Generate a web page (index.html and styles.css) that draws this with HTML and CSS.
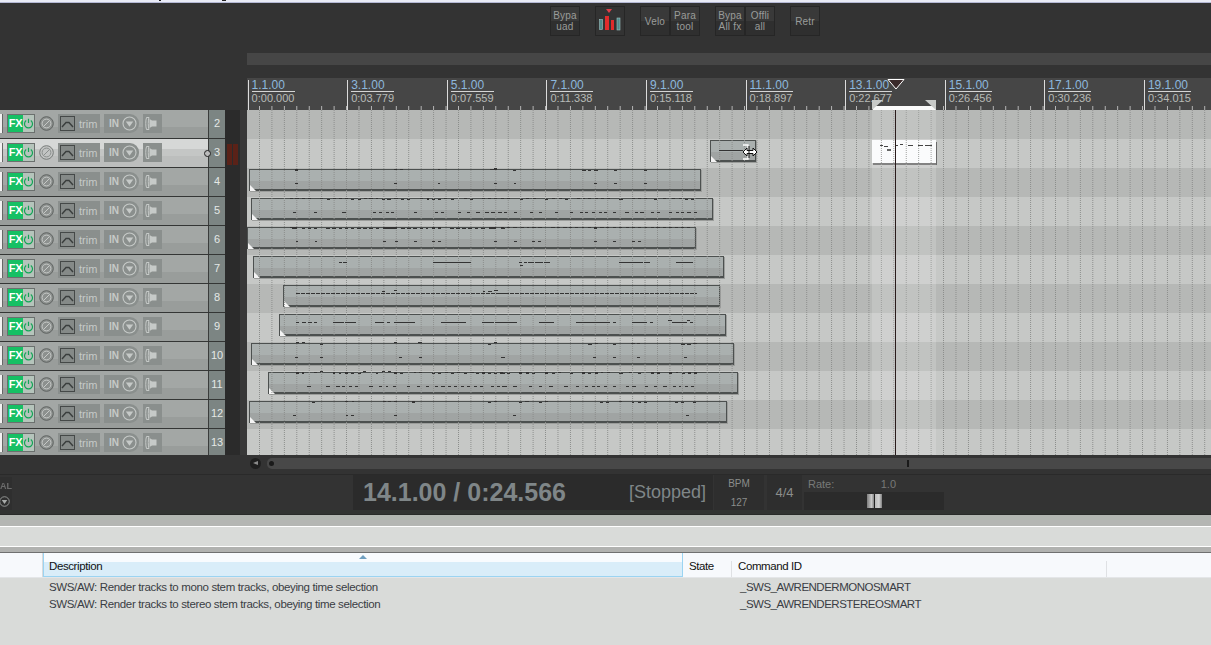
FILE: index.html
```html
<!DOCTYPE html>
<html lang="en">
<head>
<meta charset="utf-8">
<title>REAPER arrange view</title>
<link rel="stylesheet" href="styles.css">
</head>
<body>
<svg class="defs" width="0" height="0" aria-hidden="true">
  <symbol id="power" viewBox="0 0 11 11"><path d="M3.2 2.6A4 4 0 1 0 7.8 2.6M5.5 .8V5" fill="none" stroke="currentColor" stroke-width="1.2"/></symbol>
  <symbol id="knob" viewBox="0 0 15 15"><circle cx="7.5" cy="7.5" r="6.8" fill="#8c908e" stroke="#5f6361"/><circle cx="7.5" cy="7.5" r="4.4" fill="none" stroke="#c6c9c7"/><path d="M4.5 10.500 10.500 4.500" stroke="#c6c9c7"/></symbol>
  <symbol id="knobsel" viewBox="0 0 15 15"><circle cx="7.5" cy="7.5" r="6.8" fill="#c2c4c3" stroke="#777b79"/><circle cx="7.5" cy="7.5" r="4.4" fill="none" stroke="#8b8f8d"/><path d="M4.5 10.500 10.500 4.500" stroke="#8b8f8d"/></symbol>
  <symbol id="env" viewBox="0 0 15 15"><rect x=".5" y=".5" width="14" height="14" fill="#858a88" stroke="#454948"/><path d="M2 11 6 6.500H9L13 11" fill="none" stroke="#3a3e3d" stroke-width="1.400"/></symbol>
  <symbol id="arrow" viewBox="0 0 15 15"><circle cx="7.5" cy="7.5" r="6.5" fill="none" stroke="#c6cac8" stroke-width="1.1"/><path d="M3.8 5.500H11.200L7.500 10.800Z" fill="#c6cac8"/></symbol>
  <symbol id="spk" viewBox="0 0 19 19"><path d="M6 3.500H3.500C2.500 6 2.500 13 3.500 15.500H6C5 13 5 6 6 3.500Z" fill="none" stroke="#c6cac8"/><path d="M6.500 5 9 6.500H13.500V12.500H9L6.500 14Z" fill="#c6cac8"/></symbol>
</svg>

<div class="topstrip"><i class="speck speck-a"></i><i class="speck speck-b"></i></div>

<div class="toolbar">
  <div class="btn"><span>Bypa<br>uad</span></div>
  <div class="btn btn-meter">
    <svg width="30" height="30" viewBox="0 0 30 30"><path d="M11 3H17L14 7Z" fill="#e0404a"/><rect x="4.500" y="13.500" width="3" height="10" fill="#4f8a8a" stroke="#9fc4c4" stroke-width=".6"/><rect x="10" y="10" width="4" height="14" fill="#e02c2c"/><rect x="16" y="14" width="3" height="10" fill="#e02c2c"/><rect x="22" y="12" width="3" height="12" fill="#4f8a8a" stroke="#9fc4c4" stroke-width=".6"/></svg>
  </div>
  <div class="btn"><span>Velo</span></div>
  <div class="btn btn-join"><span>Para<br>tool</span></div>
  <div class="btn"><span>Bypa<br>All fx</span></div>
  <div class="btn btn-join"><span>Offli<br>all</span></div>
  <div class="btn"><span>Retr</span></div>
</div>

<div class="overview"></div>

<div class="ruler">
  <div class="mark"><u>1.1.00</u><span>0:00.000</span></div>
  <div class="mark"><u>3.1.00</u><span>0:03.779</span></div>
  <div class="mark"><u>5.1.00</u><span>0:07.559</span></div>
  <div class="mark"><u>7.1.00</u><span>0:11.338</span></div>
  <div class="mark"><u>9.1.00</u><span>0:15.118</span></div>
  <div class="mark"><u>11.1.00</u><span>0:18.897</span></div>
  <div class="mark"><u>13.1.00</u><span>0:22.677</span></div>
  <div class="mark"><u>15.1.00</u><span>0:26.456</span></div>
  <div class="mark"><u>17.1.00</u><span>0:30.236</span></div>
  <div class="mark"><u>19.1.00</u><span>0:34.015</span></div>
  <div class="sel-bar"></div>
  <svg class="sel-flag sel-flag-l" width="11" height="10" viewBox="0 0 11 10"><path d="M0 0H11L0 10Z" fill="#c8cac8"/></svg>
  <svg class="sel-flag sel-flag-r" width="11" height="10" viewBox="0 0 11 10"><path d="M0 0H11V10Z" fill="#c8cac8"/></svg>
  <svg class="playhead-top" width="18" height="11" viewBox="0 0 18 11"><path d="M1 .5H17L9 10Z" fill="#3a2a2a" stroke="#fff"/></svg>
</div>

<div class="workspace">
  <div class="tcp">
    <div class="track"><i class="sliver"></i><div class="fx"><b>FX</b><span class="pw"><svg width="11" height="11"><use href="#power"/></svg></span></div><svg class="knob" width="15" height="15"><use href="#knob"/></svg><div class="trim"><svg width="15" height="15"><use href="#env"/></svg><span>trim</span></div><div class="in"><span>IN</span><svg width="15" height="15"><use href="#arrow"/></svg></div><div class="spk"><svg width="19" height="19"><use href="#spk"/></svg></div><div class="num">2</div></div>
    <div class="track track-sel"><i class="sliver"></i><div class="fx"><b>FX</b><span class="pw"><svg width="11" height="11"><use href="#power"/></svg></span></div><svg class="knob" width="15" height="15"><use href="#knobsel"/></svg><div class="trim"><svg width="15" height="15"><use href="#env"/></svg><span>trim</span></div><div class="in"><span>IN</span><svg width="15" height="15"><use href="#arrow"/></svg></div><div class="spk"><svg width="19" height="19"><use href="#spk"/></svg></div><div class="num">3</div><i class="grip"></i></div>
    <div class="track"><i class="sliver"></i><div class="fx"><b>FX</b><span class="pw"><svg width="11" height="11"><use href="#power"/></svg></span></div><svg class="knob" width="15" height="15"><use href="#knob"/></svg><div class="trim"><svg width="15" height="15"><use href="#env"/></svg><span>trim</span></div><div class="in"><span>IN</span><svg width="15" height="15"><use href="#arrow"/></svg></div><div class="spk"><svg width="19" height="19"><use href="#spk"/></svg></div><div class="num">4</div></div>
    <div class="track"><i class="sliver"></i><div class="fx"><b>FX</b><span class="pw"><svg width="11" height="11"><use href="#power"/></svg></span></div><svg class="knob" width="15" height="15"><use href="#knob"/></svg><div class="trim"><svg width="15" height="15"><use href="#env"/></svg><span>trim</span></div><div class="in"><span>IN</span><svg width="15" height="15"><use href="#arrow"/></svg></div><div class="spk"><svg width="19" height="19"><use href="#spk"/></svg></div><div class="num">5</div></div>
    <div class="track"><i class="sliver"></i><div class="fx"><b>FX</b><span class="pw"><svg width="11" height="11"><use href="#power"/></svg></span></div><svg class="knob" width="15" height="15"><use href="#knob"/></svg><div class="trim"><svg width="15" height="15"><use href="#env"/></svg><span>trim</span></div><div class="in"><span>IN</span><svg width="15" height="15"><use href="#arrow"/></svg></div><div class="spk"><svg width="19" height="19"><use href="#spk"/></svg></div><div class="num">6</div></div>
    <div class="track"><i class="sliver"></i><div class="fx"><b>FX</b><span class="pw"><svg width="11" height="11"><use href="#power"/></svg></span></div><svg class="knob" width="15" height="15"><use href="#knob"/></svg><div class="trim"><svg width="15" height="15"><use href="#env"/></svg><span>trim</span></div><div class="in"><span>IN</span><svg width="15" height="15"><use href="#arrow"/></svg></div><div class="spk"><svg width="19" height="19"><use href="#spk"/></svg></div><div class="num">7</div></div>
    <div class="track"><i class="sliver"></i><div class="fx"><b>FX</b><span class="pw"><svg width="11" height="11"><use href="#power"/></svg></span></div><svg class="knob" width="15" height="15"><use href="#knob"/></svg><div class="trim"><svg width="15" height="15"><use href="#env"/></svg><span>trim</span></div><div class="in"><span>IN</span><svg width="15" height="15"><use href="#arrow"/></svg></div><div class="spk"><svg width="19" height="19"><use href="#spk"/></svg></div><div class="num">8</div></div>
    <div class="track"><i class="sliver"></i><div class="fx"><b>FX</b><span class="pw"><svg width="11" height="11"><use href="#power"/></svg></span></div><svg class="knob" width="15" height="15"><use href="#knob"/></svg><div class="trim"><svg width="15" height="15"><use href="#env"/></svg><span>trim</span></div><div class="in"><span>IN</span><svg width="15" height="15"><use href="#arrow"/></svg></div><div class="spk"><svg width="19" height="19"><use href="#spk"/></svg></div><div class="num">9</div></div>
    <div class="track"><i class="sliver"></i><div class="fx"><b>FX</b><span class="pw"><svg width="11" height="11"><use href="#power"/></svg></span></div><svg class="knob" width="15" height="15"><use href="#knob"/></svg><div class="trim"><svg width="15" height="15"><use href="#env"/></svg><span>trim</span></div><div class="in"><span>IN</span><svg width="15" height="15"><use href="#arrow"/></svg></div><div class="spk"><svg width="19" height="19"><use href="#spk"/></svg></div><div class="num">10</div></div>
    <div class="track"><i class="sliver"></i><div class="fx"><b>FX</b><span class="pw"><svg width="11" height="11"><use href="#power"/></svg></span></div><svg class="knob" width="15" height="15"><use href="#knob"/></svg><div class="trim"><svg width="15" height="15"><use href="#env"/></svg><span>trim</span></div><div class="in"><span>IN</span><svg width="15" height="15"><use href="#arrow"/></svg></div><div class="spk"><svg width="19" height="19"><use href="#spk"/></svg></div><div class="num">11</div></div>
    <div class="track"><i class="sliver"></i><div class="fx"><b>FX</b><span class="pw"><svg width="11" height="11"><use href="#power"/></svg></span></div><svg class="knob" width="15" height="15"><use href="#knob"/></svg><div class="trim"><svg width="15" height="15"><use href="#env"/></svg><span>trim</span></div><div class="in"><span>IN</span><svg width="15" height="15"><use href="#arrow"/></svg></div><div class="spk"><svg width="19" height="19"><use href="#spk"/></svg></div><div class="num">12</div></div>
    <div class="track"><i class="sliver"></i><div class="fx"><b>FX</b><span class="pw"><svg width="11" height="11"><use href="#power"/></svg></span></div><svg class="knob" width="15" height="15"><use href="#knob"/></svg><div class="trim"><svg width="15" height="15"><use href="#env"/></svg><span>trim</span></div><div class="in"><span>IN</span><svg width="15" height="15"><use href="#arrow"/></svg></div><div class="spk"><svg width="19" height="19"><use href="#spk"/></svg></div><div class="num">13</div></div>
  </div>
  <div class="meters"><i></i><i></i></div>
  <div class="arrange">
    <div class="lane"></div>
    <div class="lane lane-l"><div class="clip c3a"></div><div class="clip clip-sel c3b"></div></div>
    <div class="lane"><div class="clip c4"></div></div>
    <div class="lane lane-l"><div class="clip c5"></div></div>
    <div class="lane"><div class="clip c6"></div></div>
    <div class="lane lane-l"><div class="clip c7"></div></div>
    <div class="lane"><div class="clip c8"></div></div>
    <div class="lane lane-l"><div class="clip c9"></div></div>
    <div class="lane"><div class="clip c10"></div></div>
    <div class="lane lane-l"><div class="clip c11"></div></div>
    <div class="lane"><div class="clip c12"></div></div>
    <div class="lane lane-l"></div>
    <div class="grid"></div>
    <div class="sel-range"></div>
    <svg class="notes" width="964" height="345" viewBox="247 110 964 345">
      <g transform="translate(245 160) scale(.33333)">
        <path d="M447 30H456M465 30H474M579 30H585M735 30H747M150 70H159M447 70H456M579 70H585M747 70H756M135 117H145M150 117H162M170 117H180M188 117H198M225 117H235M246 118H256M264 115H272M282 115H292M300 115H308M318 118H327M338 118H348M357 115H366M372 115H384M392 115H398M410 118H420M427 118H437M447 115H460M468 118H478M486 118H494M525 115H533M561 118H570M579 118H588M597 115H605M618 118H627M657 115H666M675 118H684M711 115H720M729 115H738M747 115H756M144 157H154M207 157H216M291 157H303M384 157H393M402 157H411M423 157H432M438 157H447M507 157H516M570 157H579M588 157H597M639 157H648M666 157H675M693 157H705M720 157H732M738 157H750M759 157H768M777 157H780M135 202H147M171 205H180M189 205H198M207 205H216M243 205H255M261 205H273M282 205H291M300 205H309M318 205H327M336 205H348M354 205H366M372 205H384M393 205H402M468 205H480M486 205H498M504 205H516M525 205H534M543 205H549M615 205H627M633 205H645M651 205H663M669 205H681M690 205H699M708 205H720M768 205H780M153 244H159M210 244H216M414 244H423M450 244H459M507 244H516M561 244H570M579 244H588M747 244H756M282 307H291M294 307H306M564 307H678" fill="none" stroke="#333" stroke-width="3"/>
        <path d="M150 30H160M747 28H756M546 117H552M141 204H157M414 203H456M561 204H570M579 204H588M732 204H753" fill="none" stroke="#333" stroke-width="6"/>
      </g>
      <g transform="translate(500 160) scale(.33333)">
        <path d="M39 31H48M246 31H258M264 31H272M282 31H294M342 31H350M432 31H441M42 70H48M282 70H291M342 70H351M432 70H441M3 115H12M21 115H30M60 118H69M78 115H87M99 115H108M135 118H144M156 115H165M177 115H186M195 118H204M231 115H240M249 115H255M264 115H273M285 115H294M303 115H312M321 115H330M357 118H369M396 115H405M414 115H423M432 115H441M462 118H471M489 115H498M516 115H525M537 115H546M555 118H564M573 118H582M0 157H6M12 157H21M42 157H51M90 157H99M117 157H126M165 157H174M210 157H219M240 157H249M255 157H264M276 157H285M297 157H306M312 157H321M339 157H348M375 157H387M405 157H414M420 157H432M453 157H462M471 157H480M507 157H516M528 157H537M543 157H552M561 157H573M582 157H591M3 204H12M21 204H30M39 204H51M63 204H72M81 204H87M96 204H108M114 204H126M153 204H165M171 204H180M189 204H201M207 204H216M225 204H234M246 204H252M264 204H273M300 204H312M318 204H327M339 204H348M357 204H366M378 204H387M396 204H405M414 204H423M435 204H441M453 204H462M468 204H480M489 204H498M507 204H516M525 204H534M543 204H552M561 204H570M42 244H51M96 244H105M114 244H123M282 244H291M339 244H348M396 244H405M414 244H423M57 307H66M72 307H81M84 307H102M105 307H129M132 307H150M60 316H69M357 307H429M432 307H450M528 307H579" fill="none" stroke="#333" stroke-width="3"/>
        <path d="M282 203H291" fill="none" stroke="#333" stroke-width="6"/>
      </g>
      <g transform="translate(245 280) scale(.33333)">
        <path d="M411 35H420M447 31H456M714 34H720M729 34H741M747 31H759M153 127H162M171 127H183M189 127H201M207 127H216M264 127H297M300 127H333M390 127H417M426 127H435M447 127H510M588 127H663M711 127H747M750 127H780M153 189H162M171 189H180M225 193H234M447 189H456M519 189H531M729 193H738M747 189H756M150 232H159M225 232H234M462 232H471M522 232H531M768 232H780M207 279H216M225 276H234M282 280H288M318 280H327M339 280H348M354 276H363M393 280H399M411 276H420M429 276H438M465 280H474M507 277H513M522 277H531M561 280H570M579 280H588M600 277H609M618 280H627M636 277H645M657 280H666M675 277H687M693 280H702M729 280H738M747 280H756M765 280H780M186 319H198M243 319H255M273 319H285M291 319H300M312 319H321M330 319H339M372 319H384M402 319H411M423 319H429M444 319H453M486 319H495M516 319H525M543 319H552M570 319H579M588 319H600M609 319H618M627 319H636M648 319H657M666 319H675M687 319H696M705 319H714M738 319H747M756 319H765M771 319H780M201 367H210M300 364H309M321 364H327M414 364H423M429 364H438M447 364H456M729 367H738M747 364H756M144 406H153M303 406H309M318 406H327M447 406H456" fill="none" stroke="#333" stroke-width="3"/>
        <path d="M153 279H162M171 279H177M264 279H270M300 279H309M447 279H456M711 279H720M501 366H510" fill="none" stroke="#333" stroke-width="6"/>
        <path d="M153 41H780" fill="none" stroke="#333" stroke-width="3" stroke-dasharray="12 3"/>
      </g>
      <g transform="translate(500 280) scale(.33333)">
        <path d="M0 41H590" fill="none" stroke="#333" stroke-width="3" stroke-dasharray="12 3"/>
        <path d="M0 127H12M15 127H51M117 127H162M228 127H330M339 127H348M396 127H441M450 127H459M516 127H561M570 127H579M504 121H516M561 121H570M264 193H276M285 190H294M339 193H348M393 190H405M411 190H420M543 193H555M561 193H573M579 190H591M3 232H15M279 232H288M339 232H348M411 232H420M552 232H561M21 280H30M96 280H105M156 280H165M174 277H183M210 280H219M264 280H273M303 278H309M321 278H330M357 280H369M387 277H396M414 280H423M528 278H534M546 280H555M12 319H21M39 319H51M87 319H96M117 319H126M147 319H159M192 319H204M228 319H237M255 319H264M276 319H285M291 319H300M312 319H321M339 319H348M378 319H387M396 319H408M435 319H444M462 319H471M489 319H501M519 319H528M537 319H543M555 319H564M573 319H582M57 367H66M75 364H87M117 367H126M135 364H144M300 367H309M318 367H327M357 364H366M396 367H402M414 367H423M432 367H441M525 367H534M543 367H552M579 367H588M39 406H48M558 406H567" fill="none" stroke="#333" stroke-width="3"/>
        <path d="M0 279H9M57 279H66M78 279H87M135 279H144M246 279H255M285 279H294M453 279H462M471 279H480M507 279H516M564 279H573M582 279H591" fill="none" stroke="#333" stroke-width="6"/>
      </g>
      <g transform="translate(840 70) scale(.33333)">
        <path d="M120 226H130M133 230H143M165 228H175M180 224H190M205 227H220M235 228H250M255 227H275" fill="none" stroke="#444" stroke-width="3"/>
        <path d="M141 240H153" fill="none" stroke="#666" stroke-width="6"/>
      </g>
      <path d="M719 150.500H743" stroke="#333" fill="none"/>
    </svg>
    <div class="playhead"></div>
    <svg class="cursor" width="16" height="16" viewBox="0 0 16 16"><path d="M1 1H6V15H1" fill="none" stroke="#fff" stroke-width="1.300"/><path d="M1 8 5 4V6.500H11V4L15 8 11 12V9.500H5V12Z" fill="#fff" stroke="#111"/><path d="M7 2V14" stroke="#111"/></svg>
  </div>
</div>

<div class="scrollrow">
  <span class="scroll-btn"></span>
  <div class="scroll-track"><i class="scroll-dot"></i><i class="scroll-thumb"></i></div>
</div>

<div class="transport">
  <div class="master"><span>AL</span><svg width="11" height="11" viewBox="0 0 15 15"><use href="#arrow"/></svg></div>
  <div class="clock"><strong>14.1.00 / 0:24.566</strong><em>[Stopped]</em></div>
  <div class="bpm"><span>BPM</span><span>127</span></div>
  <div class="sig">4/4</div>
  <div class="rate">
    <div class="rate-head"><span>Rate:</span><span>1.0</span></div>
    <div class="rate-slider"><i class="rate-knob"></i></div>
  </div>
</div>

<div class="strip"></div>
<div class="filterbar"></div>
<div class="sash"></div>

<div class="listhead">
  <div class="col col-a"></div>
  <div class="col col-desc">Description<svg class="sortmark" width="8" height="4" viewBox="0 0 8 4"><path d="M0 4 4 0 8 4Z" fill="#6f9fc0"/></svg></div>
  <div class="col col-state">State</div>
  <div class="col col-id">Command ID</div>
  <div class="col col-rest"></div>
</div>
<div class="list">
  <div class="row"><span class="r-desc">SWS/AW: Render tracks to mono stem tracks, obeying time selection</span><span class="r-id">_SWS_AWRENDERMONOSMART</span></div>
  <div class="row"><span class="r-desc">SWS/AW: Render tracks to stereo stem tracks, obeying time selection</span><span class="r-id">_SWS_AWRENDERSTEREOSMART</span></div>
</div>
</body>
</html>
```
FILE: styles.css
```css
* { box-sizing: border-box; }
html, body { margin: 0; padding: 0; }
body {
  width: 1211px; height: 645px; overflow: hidden; position: relative;
  background: #333; color: #ddd;
  font-family: "Liberation Sans", Arial, sans-serif;
}
.defs { position: absolute; }

.topstrip {
  height: 3px; background: #e9ebf6; border-bottom: 1px solid #b4b8d4; position: relative;
}
.speck { position: absolute; top: 0; height: 1px; background: #222; }
.speck-a { left: 159px; width: 2px; }
.speck-b { left: 222px; width: 4px; }

.toolbar { height: 50px; display: flex; align-items: flex-start; padding: 3px 0 0 550px; }
.btn {
  width: 30px; height: 30px; flex: none; margin-right: 15px;
  display: flex; align-items: center; justify-content: center; text-align: center;
  background: linear-gradient(#393939 0 50%, #2f2f2f 50%);
  border: 1px solid #262626; color: #9a9c9a;
  font-size: 10px; line-height: 11px; letter-spacing: .2px;
}
.btn-meter { background: #333; }
.btn-meter svg { flex: none; }
.btn:nth-child(3) { margin-right: 0; }
.btn:nth-child(5) { margin-right: 0; }
.btn-join { margin-right: 15px; }

.overview { height: 12px; margin: 0 0 13px 247px; background: #464646; }

.ruler {
  height: 32px; margin-left: 247px; padding: 2px 0 0 .6px;
  display: flex; position: relative; overflow: hidden; background: #464646;
}
.ruler::after {
  content: ""; position: absolute; left: 12.4px; right: 0; bottom: 0; height: 4px;
  background: linear-gradient(90deg, #b9b9b9 1px, transparent 1px) 0 0 / 12.45px 100%;
}
.mark {
  flex: none; width: 99.6px; border-left: 1px solid #dcdcdc; padding-left: 3px;
  display: flex; flex-direction: column; align-items: flex-start;
}
.mark u {
  text-decoration: none; font-size: 12px; line-height: 11px; color: #8db8dd;
  border-bottom: 1px solid #d5d5d5; width: 43px; height: 12px; white-space: nowrap;
}
.mark span { font-size: 11px; line-height: 13px; color: #b7bab6; margin-top: 0; white-space: nowrap; }
.sel-bar { position: absolute; left: 626px; width: 63px; bottom: 0; height: 4px; background: #fafafa; z-index: 1; }
.sel-flag { position: absolute; top: 22px; z-index: 2; }
.sel-flag-l { left: 625px; }
.sel-flag-r { left: 678px; }
.playhead-top { position: absolute; left: 640px; top: 1px; z-index: 3; }

.workspace { height: 345px; display: flex; overflow: hidden; }
.tcp { width: 225px; flex: none; height: 345px; overflow: hidden; }
.track {
  height: 29px; display: flex; align-items: center; position: relative; padding-bottom: 1px;
  background: linear-gradient(#a3a7a5 0 62%, #999d9b 62%);
  border-bottom: 1px solid #343635;
}
.track-sel { background: linear-gradient(#d6d8d7 0 35%, #c4c6c5 35% 60%, #bcbebd 60%); }
.sliver { width: 3px; height: 19px; background: #f2f2f2; flex: none; border-right: 1px solid #666; }
.fx {
  width: 28px; height: 19px; margin-left: 4px; flex: none; display: flex;
  border: 1px solid #6b706e; background: #b5c4bb;
}
.fx b {
  width: 15px; background: #16c064; color: #fff; font-size: 11px; line-height: 17px; text-align: center; letter-spacing: -.3px;
}
.pw { flex: 1; display: flex; align-items: center; justify-content: center; color: #12a455; }
.pw svg { display: block; }
.knob { margin-left: 4px; flex: none; }
.trim {
  width: 42px; height: 19px; margin-left: 4px; flex: none; display: flex; align-items: center;
  padding-left: 2px; background: #8a8f8d; color: #c6cac8; font-size: 11px;
}
.trim svg { flex: none; }
.trim span { margin-left: 4px; }
.in {
  width: 35px; height: 19px; margin-left: 4px; flex: none; display: flex; align-items: center;
  justify-content: space-between; padding: 0 2px 0 5px; background: #8a8f8d; border-radius: 0 9px 9px 0;
  color: #c6cac8; font-size: 10px; font-weight: bold;
}
.spk { width: 19px; height: 19px; margin-left: 4px; flex: none; background: #8a8f8d; }
.spk svg { display: block; }
.num {
  margin-left: auto; width: 17px; align-self: stretch; flex: none; margin-bottom: -1px;
  background: #7c8583; border-left: 1px solid #3a3c3b; color: #e4e8e6;
  font-size: 11px; text-align: center; line-height: 27px;
}
.grip {
  position: absolute; left: 204px; top: 11px; width: 7px; height: 7px; border-radius: 50%;
  border: 1px solid #222; background: #bbb;
}
.meters {
  width: 15px; flex: none; background: #2b2b2b; padding: 34px 3px 0 2px;
  display: flex; align-items: flex-start; gap: 1px;
}
.meters i { width: 5px; height: 21px; background: #5a2218; flex: none; }

.arrange {
  width: 971px; flex: none; border-left: 7px solid #383838; position: relative; overflow: hidden;
}
.lane { height: 29px; background: #b6b8b6; position: relative; }
.lane-l { background: #c6c8c6; }
.grid {
  position: absolute; inset: 0 0 0 12px;
  background: linear-gradient(90deg, #8a8c8a 1px, transparent 1px) 0 0 / 12.45px 100%;
  -webkit-mask-image: repeating-linear-gradient(#000 0 1px, transparent 1px 2px);
  mask-image: repeating-linear-gradient(#000 0 1px, transparent 1px 2px);
}
.sel-range { position: absolute; left: 625px; width: 64px; top: 0; bottom: 0; background: rgba(255,255,255,.16); }
.clip {
  position: absolute; top: 1px; height: 22px;
  background: linear-gradient(#aab0af 0 58%, #a0a4a3 58%);
  border: 1px solid #4c504f; border-bottom-width: 2px;
  box-shadow: 1px 1px 0 #9b9d9b;
}
.clip::after {
  content: ""; position: absolute; left: 0; bottom: -2px;
  border-left: 6px solid #f4f4f4; border-top: 6px solid transparent;
}
.clip-sel { background: #fafbfc; border: none; box-shadow: 1px 2px 0 #6a6a6a; height: 23px; }
.clip-sel::after { display: none; }
.c3a { left: 463px; width: 46px; }
.c3b { left: 625px; width: 64px; }
.c4 { left: 2px; width: 452px; }
.c5 { left: 4px; width: 462px; }
.c6 { left: 0; width: 449px; }
.c7 { left: 6px; width: 471px; }
.c8 { left: 36px; width: 437px; }
.c9 { left: 32px; width: 447px; }
.c10 { left: 4px; width: 483px; }
.c11 { left: 21px; width: 470px; }
.c12 { left: 2px; width: 478px; }
.notes { position: absolute; left: 0; top: 0; shape-rendering: crispEdges; }
.playhead { position: absolute; left: 648px; top: 0; bottom: 0; width: 1px; background: #2a1c1c; }
.cursor { position: absolute; left: 495px; top: 34px; }

.scrollrow { height: 19px; padding-top: 3px; display: flex; align-items: flex-start; padding-left: 250px; }
.scroll-btn {
  width: 11px; height: 11px; border-radius: 50%; background: #1f1f1f; flex: none; position: relative;
}
.scroll-btn::after {
  content: ""; position: absolute; left: 3px; top: 3px;
  border-right: 5px solid #8a8a8a; border-top: 2.5px solid transparent; border-bottom: 2.5px solid transparent;
}
.scroll-track {
  flex: 1; height: 11px; margin-left: 6px; background: #484848; border-radius: 5px 0 0 5px; position: relative;
}
.scroll-dot { position: absolute; left: 2px; top: 3px; width: 5px; height: 5px; border-radius: 50%; background: #1a1a1a; }
.scroll-thumb { position: absolute; left: 640px; top: 2px; width: 2px; height: 7px; background: #1a1a1a; }

.transport {
  height: 41px; display: flex; border-top: 1px solid #2a2a2a; border-bottom: 1px solid #2a2a2a; padding-bottom: 4px;
}
.master {
  width: 12px; flex: none; margin-top: 2px; padding-top: 2px; background: #2f2f2f; overflow: hidden; display: flex;
  flex-direction: column; align-items: flex-end; font-size: 9px; font-weight: bold; color: #7a7a7a; line-height: 14px;
  opacity: .8;
}
.master svg { margin: 3px 2px 0 0; flex: none; }
.clock {
  margin-left: 341px; width: 360px; flex: none; background: #2b2b2b; display: flex; align-items: center;
  padding: 0 7px 0 10px; justify-content: space-between; color: #7f8688;
}
.clock strong { font-size: 25px; }
.clock em { font-style: normal; font-size: 18px; }
.bpm {
  width: 50px; margin-left: 1px; flex: none; display: flex; flex-direction: column; align-items: center;
  justify-content: space-between; font-size: 10px; color: #8b8d8b; padding: 2px 0 0; line-height: 14px;
  background: #2e2e2e;
}
.sig {
  width: 35px; margin-left: 3px; flex: none; background: #2e2e2e; color: #8b8d8b;
  font-size: 13px; line-height: 35px; text-align: center;
}
.rate { width: 140px; margin-left: 2px; flex: none; display: flex; flex-direction: column; }
.rate-head {
  height: 17px; display: flex; align-items: center; font-size: 11px; color: #787a78;
  padding: 0 48px 0 4px; justify-content: space-between;
}
.rate-slider { flex: 1; background: #2b2b2b; display: flex; justify-content: center; align-items: center; padding-left: 1px; }
.rate-knob {
  width: 15px; height: 14px;
  background: linear-gradient(90deg, #7c7c7c 0, #c8c8c8 30%, #8a8a8a 45%, #222 50%, #bbb 55%, #d4d4d4 80%, #808080 100%);
}

.strip { height: 11px; background: #b4b6b3; }
.filterbar { height: 21px; background: #d9dbd9; border-top: 1px solid #fff; border-bottom: 1px solid #fff; }
.sash { height: 6px; background: linear-gradient(#b1b2b0 0 5px, #6f7070 5px); }

.listhead {
  height: 25px; display: flex; background: #f7f9fc; border-bottom: 1px solid #e4e6e8;
  font-size: 11.5px; letter-spacing: -.4px; color: #111; line-height: 26px;
}
.col { flex: none; padding-left: 5px; position: relative; white-space: nowrap; }
.col-a { width: 43px; border-right: 1px solid #d8dadd; }
.col-desc {
  width: 640px; background: linear-gradient(#f8fbfe 0 40%, #d9edf9 40%);
  border: 1px solid #9bd4f2; border-width: 0 1px 1px 1px;
}
.sortmark { position: absolute; left: 315px; top: 2px; }
.col-state { width: 49px; padding-left: 6px; }
.col-state::after, .col-id::after {
  content: ""; position: absolute; right: 0; top: 8px; bottom: 0; width: 1px; background: #dfe1e4;
}
.col-id { width: 375px; padding-left: 6px; }
.col-rest { flex: 1; }
.list { background: #d9dbd9; height: 68px; padding-top: 1px; font-size: 11.5px; letter-spacing: -.36px; color: #3a3d44; }
.row { display: flex; height: 17px; line-height: 17px; padding-left: 49px; white-space: nowrap; }
.r-desc { width: 691px; flex: none; }
.r-id { letter-spacing: -.5px; }
```
